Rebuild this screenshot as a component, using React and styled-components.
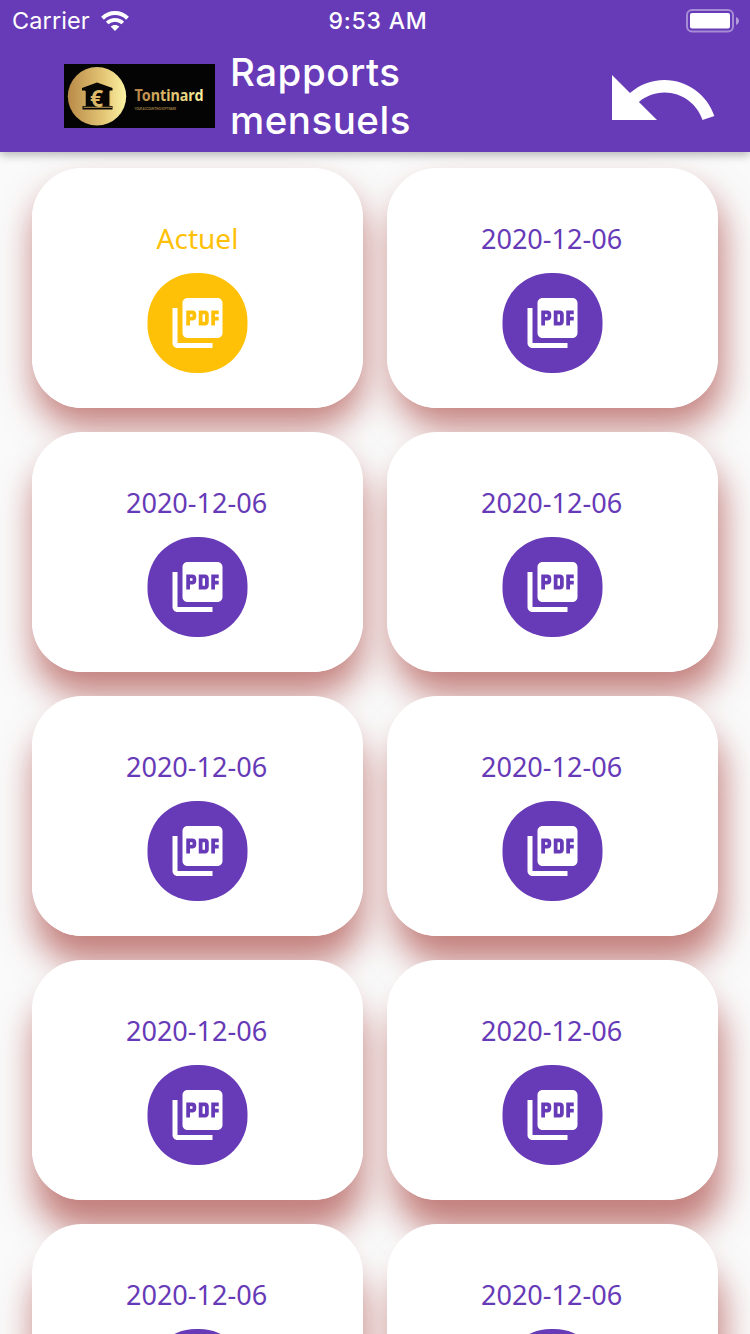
import React from "react";
import styled, { createGlobalStyle } from "styled-components";
import { MdPictureAsPdf, MdUndo } from "react-icons/md";

const PURPLE = "#673ab7";
const AMBER = "#ffc107";

const GlobalStyle = createGlobalStyle`
  * { box-sizing: border-box; }
  html, body { margin: 0; padding: 0; background: #fafafa; }
`;

const Screen = styled.main`
  display: flex;
  flex-direction: column;
  width: 750px;
  height: 1334px;
  overflow: hidden;
  background: #fafafa;
`;

const Header = styled.header`
  flex: none;
  height: 152px;
  color: #fff;
  background: ${PURPLE};
  font-family: Inter, "Liberation Sans", sans-serif;
  box-shadow: 0 3px 9px rgba(0, 0, 0, 0.28);
  position: relative;
  z-index: 2;
`;

const StatusBar = styled.div`
  display: grid;
  grid-template-columns: 1fr auto 1fr;
  align-items: center;
  height: 41px;
  padding: 0 10px 0 12px;
  font-size: 23.5px;
`;

const Carrier = styled.div`
  display: flex;
  align-items: center;
  gap: 11px;
  letter-spacing: 0.1px;
`;

const Clock = styled.div`
  font-weight: 500;
  font-size: 23px;
  letter-spacing: 0.8px;
  padding: 0 0 0 4px;
`;

const BatterySlot = styled.div`
  display: flex;
  justify-content: flex-end;
`;

const Toolbar = styled.div`
  display: flex;
  align-items: center;
  height: 110px;
  padding: 0 28px 0 64px;
`;

const Title = styled.h1`
  flex: 1;
  margin: 0 0 1px 15px;
  max-width: 220px;
  font-size: 38.5px;
  line-height: 48px;
  font-weight: 500;
  letter-spacing: 0.5px;
`;

const BackButton = styled.button`
  display: flex;
  flex: none;
  margin: 8px 0 0 auto;
  padding: 0;
  border: 0;
  color: inherit;
  background: none;
`;

const Grid = styled.section`
  display: grid;
  flex: none;
  grid-template-columns: repeat(2, 331px);
  grid-auto-rows: 240px;
  gap: 24px;
  padding: 16px 32px;
  position: relative;
  z-index: 0;
`;

const Card = styled.article`
  display: flex;
  flex-direction: column;
  align-items: center;
  padding-top: 50px;
  border-radius: 50px;
  background: #fff;
  color: ${(p) => p.$color};
  position: relative;

  &::before {
    content: "";
    position: absolute;
    inset: 0;
    z-index: -1;
    border-radius: 50px;
    box-shadow: ${(p) => p.$shift}px ${(p) => p.$drop}px 34px -1px rgba(146, 18, 12, 0.52);
  }
`;

const Label = styled.div`
  height: 40px;
  line-height: 40px;
  font-family: "Noto Sans", sans-serif;
  font-size: 28px;
  white-space: nowrap;
  transform: ${(p) => (p.$numeric ? "translateX(-0.5px) scaleX(0.967)" : "none")};
`;

const PdfButton = styled.button`
  display: flex;
  align-items: center;
  justify-content: center;
  flex: none;
  width: 100px;
  height: 100px;
  margin-top: 15px;
  padding: 0;
  border: 0;
  border-radius: 48px;
  color: #fff;
  background: ${(p) => p.$color};
  transform: translateX(-0.5px);
`;

function Wifi() {
  return (
    <svg width="28" height="20" viewBox="0 0 28 20" fill="none" stroke="#fff">
      <path d="M1.5 7.2C8.5.4 19.500.4 26.500 7.200" strokeWidth="4" />
      <path d="M6.200 12C10.600 7.700 17.400 7.700 21.800 12" strokeWidth="3.700" />
      <path d="M14 20L9.600 15.600C12 13.300 16 13.300 18.400 15.600Z" fill="#fff" stroke="none" />
    </svg>
  );
}

function Battery() {
  return (
    <svg width="54" height="24" viewBox="0 0 54 24">
      <rect x="1" y="1" width="46" height="21.500" rx="5" fill="none" stroke="#fff" strokeOpacity=".42" strokeWidth="2" />
      <rect x="4" y="4" width="40" height="15.500" rx="2" fill="#fff" />
      <path d="M50 8C54 9.500 54 14.500 50 16Z" fill="#fff" fillOpacity=".5" />
    </svg>
  );
}

function Logo() {
  return (
    <svg width="151" height="64" viewBox="0 0 151 64">
      <defs>
        <linearGradient id="coin">
          <stop offset="0" stopColor="#b98a48" />
          <stop offset=".6" stopColor="#e3c574" />
          <stop offset="1" stopColor="#fbf3a4" />
        </linearGradient>
        <linearGradient id="word">
          <stop offset="0" stopColor="#b67f42" />
          <stop offset=".5" stopColor="#dfc06d" />
          <stop offset="1" stopColor="#f8f0a0" />
        </linearGradient>
      </defs>
      <rect width="151" height="64" fill="#040404" />
      <circle cx="33" cy="32.300" r="29.200" fill="url(#coin)" />
      <path
        d="M33 18.500L48.500 24V26.500H46V42H48.500V45.500H18.500V42H21V26.500H18V24Z"
        fill="#080704"
      />
      <path d="M19.500 43.300H48M21.300 27V42M45.800 27V42" stroke="#d3ab60" strokeWidth=".9" />
      <text x="32.500" y="43" textAnchor="middle" fontFamily="Noto Sans, sans-serif" fontWeight="700" fontSize="23" fill="#dcb969">€</text>
      <text x="70.500" y="37" textLength="69" lengthAdjust="spacingAndGlyphs" fontFamily="Noto Sans, sans-serif" fontWeight="700" fontSize="15.500" fill="url(#word)">Tontinard</text>
      <text x="70.500" y="45.600" textLength="41.500" lengthAdjust="spacingAndGlyphs" fontFamily="Lato, sans-serif" fontWeight="700" fontSize="3.300" fill="#a8854a">YOUR ACCOUNTING SOFTWARE</text>
    </svg>
  );
}

const reports = ["Actuel", ...Array(9).fill("2020-12-06")];

export default function App() {
  return (
    <Screen>
      <GlobalStyle />
      <Header>
        <StatusBar>
          <Carrier>Carrier<Wifi /></Carrier>
          <Clock>9:53 AM</Clock>
          <BatterySlot><Battery /></BatterySlot>
        </StatusBar>
        <Toolbar>
          <Logo />
          <Title>Rapports mensuels</Title>
          <BackButton aria-label="Retour"><MdUndo size={120} /></BackButton>
        </Toolbar>
      </Header>
      <Grid>
        {reports.map((label, i) => {
          const color = i === 0 ? AMBER : PURPLE;
          return (
            <Card key={i} $color={color} $shift={i % 2 ? 6 : 1} $drop={20 + Math.floor(i / 2) * 4}>
              <Label $numeric={i > 0}>{label}</Label>
              <PdfButton $color={color} aria-label="PDF"><MdPictureAsPdf size={60} /></PdfButton>
            </Card>
          );
        })}
      </Grid>
    </Screen>
  );
}
